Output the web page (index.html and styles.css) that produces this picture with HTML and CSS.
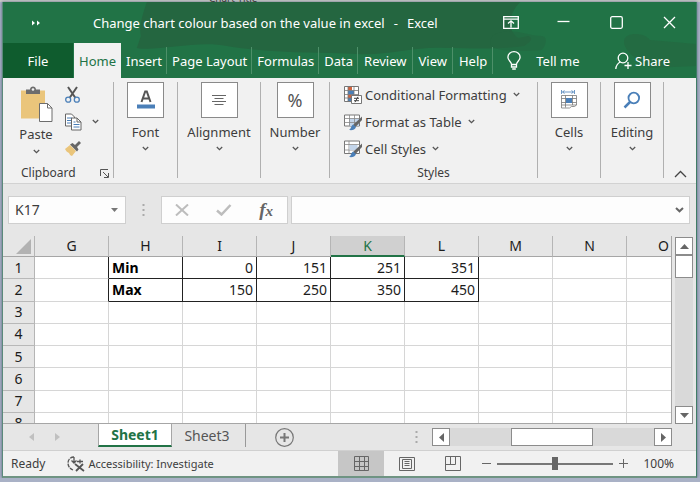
FILE: index.html
```html
<!DOCTYPE html>
<html lang="en">
<head>
<meta charset="utf-8">
<title>Change chart colour based on the value in excel - Excel</title>
<link rel="stylesheet" href="styles.css">
</head>
<body>
<div class="behind"><span>Chart Title</span></div>
<div class="window">
  <header class="top">
    <svg class="top-art" viewBox="0 0 694 76" preserveAspectRatio="none" aria-hidden="true">
      <path d="M144 0c-4 12-8 24-6 34l-4 12c20 4 60-8 90-2 50 8 90 6 130 8 30 2 60-8 90-6 20 0 50 2 78-2 6-4 10-8 4-10l-10 2c-12-8-10-24 2-36z"/>
      <path d="M488 42c-2-8 8-13 17-12 12-2 22 4 34 4 8 0 4 12 0 14-20 2-48 2-51-6z" opacity=".5"/>
      <path d="M622 38c2-8 20-8 26 0l46 4v22l-46 2c-8-6-28-16-26-28z" opacity=".6"/>
    </svg>
    <div class="titlebar">
      <button class="qat" aria-label="Customize Quick Access Toolbar"><svg width="10" height="8" viewBox="0 0 10 8"><path d="M1 1.500l3 2.500-3 2.500zM6 1.500l3 2.500-3 2.500z" fill="#fff"/></svg></button>
      <h1>Change chart colour based on the value in excel<span class="dash">-</span>Excel</h1>
      <div class="winbtns">
        <button aria-label="Ribbon Display Options"><svg width="16" height="13" viewBox="0 0 16 13"><path d="M.7.7h14.6v11.6H.7zM.7 3.2h14.6M8 11.500V5M5 7.500L8 4.800l3 2.700"/></svg></button>
        <button aria-label="Minimize"><svg width="13" height="13" viewBox="0 0 13 13"><path d="M.5 5.500h12"/></svg></button>
        <button aria-label="Maximize"><svg width="13" height="13" viewBox="0 0 13 13"><rect x=".7" y=".7" width="11.600" height="11.600" rx="1.500"/></svg></button>
        <button aria-label="Close"><svg width="13" height="13" viewBox="0 0 13 13"><path d="M1 1l11 11M12 1L1 12"/></svg></button>
      </div>
    </div>
    <nav class="tabs">
      <button class="file">File</button>
      <button class="active">Home</button>
      <button>Insert</button>
      <button>Page Layout</button>
      <button>Formulas</button>
      <button>Data</button>
      <button>Review</button>
      <button>View</button>
      <button>Help</button>
      <button class="tell"><svg width="14" height="19" viewBox="0 0 14 19"><path d="M4.500 13.500c0-3-3.600-3.600-3.600-7.300a6.100 5.500 0 0 1 12.200 0c0 3.700-3.600 4.300-3.600 7.300zM4.500 13.500v2.500h5v-2.500M5.200 18h3.600"/></svg>Tell me</button>
      <button class="share"><svg width="17" height="18" viewBox="0 0 17 18"><circle cx="8" cy="6" r="4.800"/><path d="M.8 17c.3-3.500 2-5.800 4.600-7M9.500 13.500h7M13 10v7"/></svg>Share</button>
    </nav>
  </header>

  <section class="ribbon">
    <div class="group clipboard">
      <div class="clip-body">
        <button class="paste">
          <svg width="33" height="36" viewBox="0 0 33 36"><path d="M1 4.500h24V32.500H1z" fill="#eac57b"/><path d="M6 8V3.500h4C10 1.500 11.500.5 13 .5s3 1 3 3h4V8z" fill="#6d6d6d"/><circle cx="13" cy="3.500" r="1.300" fill="#f1f1f1"/><path d="M19.500 17.500h8l4.500 4.500v13.500H19.500z" fill="#fff" stroke="#6d6d6d"/><path d="M27.500 17.500V22H32" fill="none" stroke="#6d6d6d"/></svg>
          <span>Paste</span>
          <svg class="chev" viewBox="0 0 7 5"><path d="M.8 1l2.700 2.600L6.200 1"/></svg>
        </button>
        <div class="clip-tools">
          <button aria-label="Cut"><svg width="17" height="18" viewBox="0 0 17 18" fill="none"><path d="M3 1L10.500 12M12 1L4.500 12" stroke="#555" stroke-width="2"/><circle cx="3.200" cy="13.700" r="2.500" stroke="#4a7fb8" stroke-width="1.300"/><circle cx="11.800" cy="13.700" r="2.500" stroke="#4a7fb8" stroke-width="1.300"/></svg></button>
          <button aria-label="Copy"><svg width="17" height="18" viewBox="0 0 17 18" fill="#fff" stroke="#666"><path d="M.5 1h6l3 3v9h-9z"/><path d="M2 5h5M2 7.500h5M2 10h5" stroke="#4a7fb8"/><path d="M6.500 5H12l4 4v8H6.500z"/><path d="M12 5v4h4" fill="none"/><path d="M8.500 9h2M8.500 11.500h6M8.500 14h6" stroke="#4a7fb8"/></svg></button>
          <button aria-label="Format Painter"><svg width="17" height="16" viewBox="0 0 17 16"><path d="M0 9l5-4 6 6-4 5c-2-1-2-1-3-3-2-1-3-2-4-4z" fill="#eac57b"/><path d="M5 4.500L7.500 3l2.500 2L14 1l2 2-4 4 1.500 2.500L12 11.500z" fill="#666"/></svg></button>
        </div>
        <button class="more" aria-label="Copy options"><svg class="chev" viewBox="0 0 7 5"><path d="M.8 1l2.700 2.600L6.200 1"/></svg></button>
      </div>
      <div class="caption"><span>Clipboard</span><button aria-label="Clipboard settings"><svg width="9" height="9" viewBox="0 0 9 9" fill="none" stroke="#555"><path d="M.5 7V.5H8M3 3l5 5M8.500 4v4.500H4"/></svg></button></div>
    </div>
    <div class="group font"><button class="big"><span class="box"><svg width="20" height="22" viewBox="0 0 20 22"><path d="M5.500 13L9.200 2.500h1.600L14.500 13M6.800 9.500h6.400" fill="none" stroke="#555" stroke-width="2"/><path d="M1 15.500h18v4H1z" fill="#4a7fb8"/></svg></span><span>Font</span><svg class="chev" viewBox="0 0 7 5"><path d="M.8 1l2.700 2.600L6.200 1"/></svg></button></div>
    <div class="group alignment"><button class="big"><span class="box"><svg width="16" height="12" viewBox="0 0 16 12" stroke="#666"><path d="M1 1.500h14M3.500 4.500h9M1 7.500h14M3.500 10.500h9"/></svg></span><span>Alignment</span><svg class="chev" viewBox="0 0 7 5"><path d="M.8 1l2.700 2.600L6.200 1"/></svg></button></div>
    <div class="group number"><button class="big"><span class="box pct">%</span><span>Number</span><svg class="chev" viewBox="0 0 7 5"><path d="M.8 1l2.700 2.600L6.200 1"/></svg></button></div>
    <div class="group styles">
      <div class="style-list">
        <button><svg width="18" height="18" viewBox="0 0 18 18"><path d="M.5.5h14v15H.5z" fill="#fff" stroke="#777"/><path d="M4 1h4v3.500H4zM4 8.500h6V12H4z" fill="#d0633f"/><path d="M4 4.500h6v4H4zM4 12h3v3H4z" fill="#4a7fb8"/><path d="M4 .5v15M10 .5v8M.5 4.500h14M.5 8.500h14M.5 12h7" stroke="#777" stroke-width=".8"/><path d="M7.500 9.500h10v8h-10z" fill="#fff" stroke="#777"/><path d="M10 12.300h5M10 14.700h5M14 10.800l-3 5.400" stroke="#444"/></svg>Conditional Formatting<svg class="chev" viewBox="0 0 7 5"><path d="M.8 1l2.700 2.600L6.200 1"/></svg></button>
        <button><svg width="18" height="18" viewBox="0 0 18 18"><path d="M.5 2h15v11H.5z" fill="#fff" stroke="#777"/><path d="M5 5.500h10V13H5z" fill="#c3d5ea"/><path d="M5.500 2v11M10.500 2v11M.5 5.500h15M.5 9.500h15" stroke="#888" stroke-width=".8"/><path d="M18 3.500V7l-6.500 7-2.500-2z" fill="#666"/><path d="M9 11.500l3 2.500c-1 3-4 3.500-7 3 2-1 2-4 4-5.500z" fill="#4a7fb8"/></svg>Format as Table<svg class="chev" viewBox="0 0 7 5"><path d="M.8 1l2.700 2.600L6.200 1"/></svg></button>
        <button><svg width="18" height="18" viewBox="0 0 18 18"><path d="M.5 1h15v12.500H.5z" fill="#fff" stroke="#777"/><path d="M.5 4.500h15M.5 10h15M5 1v12.500" stroke="#888" stroke-width=".8"/><path d="M5.500 5h8v5h-8z" fill="#c3d5ea"/><path d="M18 3.500V7l-6.500 7-2.500-2z" fill="#666"/><path d="M9 11.500l3 2.500c-1 3-4 3.500-7 3 2-1 2-4 4-5.500z" fill="#4a7fb8"/></svg>Cell Styles<svg class="chev" viewBox="0 0 7 5"><path d="M.8 1l2.700 2.600L6.200 1"/></svg></button>
      </div>
      <div class="caption"><span>Styles</span></div>
    </div>
    <div class="group cells"><button class="big"><span class="box"><svg width="18" height="20" viewBox="0 0 18 20" fill="none"><path d="M1.500 0v4M14.500 0v4M2.500 2h11M4.500.5L2.500 2l2 1.500M11.500.5l2 1.500-2 1.500" stroke="#4a7fb8" stroke-width=".8"/><path d="M1.500 5.500h15v9.500h-15zM1.500 8.500h15M1.500 12.500h15M5.500 5.500v12M12.500 5.500v9.500M1.500 15v3h8l2-1.500h3L16.500 15" stroke="#777" stroke-width=".8"/><path d="M6 8h6v5H6z" fill="#4a7fb8"/></svg></span><span>Cells</span><svg class="chev" viewBox="0 0 7 5"><path d="M.8 1l2.700 2.600L6.200 1"/></svg></button></div>
    <div class="group editing"><button class="big"><span class="box"><svg width="18" height="18" viewBox="0 0 18 18" fill="none" stroke="#4a7fb8"><circle cx="10.800" cy="7" r="5.300" stroke-width="1.800"/><path d="M7 11l-5.500 5.500" stroke-width="2.500"/></svg></span><span>Editing</span><svg class="chev" viewBox="0 0 7 5"><path d="M.8 1l2.700 2.600L6.200 1"/></svg></button></div>
    <button class="collapse" aria-label="Collapse the Ribbon"><svg width="13" height="8" viewBox="0 0 13 8"><path d="M1 7l5.500-5.500L12 7" fill="none" stroke="#444" stroke-width="1.300"/></svg></button>
  </section>

  <section class="formula">
    <div class="namebox"><input aria-label="Name Box" value="K17"><svg width="7" height="4" viewBox="0 0 7 4"><path d="M0 0h7L3.500 4z" fill="#777"/></svg></div>
    <svg class="grip" width="3" height="12" viewBox="0 0 3 12"><path d="M.5 0h2v2h-2zM.5 5h2v2h-2zM.5 10h2v2h-2z" fill="#aaa"/></svg>
    <div class="fxbox">
      <button aria-label="Cancel"><svg width="14" height="12" viewBox="0 0 14 12"><path d="M1 .5l12 11M13 .5L1 11.500" stroke="#bdbdbd" stroke-width="2"/></svg></button>
      <button aria-label="Enter"><svg width="16" height="12" viewBox="0 0 16 12"><path d="M1 6.500l4.500 4L14.500 1" fill="none" stroke="#bdbdbd" stroke-width="2.500"/></svg></button>
      <button class="fx" aria-label="Insert Function"><i>f</i><i class="x">x</i></button>
    </div>
    <div class="fbar"><input aria-label="Formula Bar"><svg width="9" height="6" viewBox="0 0 9 6"><path d="M1 1l3.500 3.300L8 1" fill="none" stroke="#666" stroke-width="2"/></svg></div>
  </section>

  <section class="sheet">
    <div class="grid">
      <table>
        <colgroup><col class="c0"><col span="9" class="c"></colgroup>
        <thead><tr><th class="corner"><svg width="15" height="15" viewBox="0 0 15 15"><path d="M15 0v15H0z" fill="#b2b2b2"/></svg></th><th>G</th><th>H</th><th>I</th><th>J</th><th class="sel">K</th><th>L</th><th>M</th><th>N</th><th>O</th></tr></thead>
        <tbody>
          <tr class="data"><th>1</th><td class="edge"></td><td>Min</td><td>0</td><td>151</td><td>251</td><td>351</td><td></td><td></td><td></td></tr>
          <tr class="data"><th>2</th><td class="edge"></td><td>Max</td><td>150</td><td>250</td><td>350</td><td>450</td><td></td><td></td><td></td></tr>
          <tr><th>3</th><td></td><td></td><td></td><td></td><td></td><td></td><td></td><td></td><td></td></tr>
          <tr><th>4</th><td></td><td></td><td></td><td></td><td></td><td></td><td></td><td></td><td></td></tr>
          <tr><th>5</th><td></td><td></td><td></td><td></td><td></td><td></td><td></td><td></td><td></td></tr>
          <tr><th>6</th><td></td><td></td><td></td><td></td><td></td><td></td><td></td><td></td><td></td></tr>
          <tr><th>7</th><td></td><td></td><td></td><td></td><td></td><td></td><td></td><td></td><td></td></tr>
          <tr><th>8</th><td></td><td></td><td></td><td></td><td></td><td></td><td></td><td></td><td></td></tr>
        </tbody>
      </table>
    </div>
    <div class="vscroll">
      <button aria-label="Scroll up"><svg width="9" height="5" viewBox="0 0 9 5"><path d="M0 5h9L4.500 0z"/></svg></button>
      <div class="vthumb"></div>
      <div class="track"></div>
      <button aria-label="Scroll down"><svg width="9" height="5" viewBox="0 0 9 5"><path d="M0 0h9L4.500 5z"/></svg></button>
    </div>
  </section>

  <section class="sheetbar">
    <div class="arrows"><button aria-label="Previous sheet"><svg width="5" height="8" viewBox="0 0 5 8"><path d="M5 0v8L0 4z"/></svg></button><button aria-label="Next sheet"><svg width="5" height="8" viewBox="0 0 5 8"><path d="M0 0v8l5-4z"/></svg></button></div>
    <button class="stab on">Sheet1</button>
    <button class="stab">Sheet3</button>
    <button class="add" aria-label="New sheet"><svg width="19" height="19" viewBox="0 0 19 19" fill="none" stroke="#777"><circle cx="9.500" cy="9.500" r="8.800" stroke-width="1.200"/><path d="M9.500 5v9M5 9.500h9" stroke-width="2"/></svg></button>
    <svg class="grip" width="3" height="12" viewBox="0 0 3 12"><path d="M.5 0h2v2h-2zM.5 5h2v2h-2zM.5 10h2v2h-2z" fill="#aaa"/></svg>
    <div class="hscroll">
      <button aria-label="Scroll left"><svg width="5" height="9" viewBox="0 0 5 9"><path d="M5 0v9L0 4.500z"/></svg></button>
      <div class="track"></div>
      <div class="hthumb"></div>
      <div class="track"></div>
      <button aria-label="Scroll right"><svg width="5" height="9" viewBox="0 0 5 9"><path d="M0 0v9l5-4.500z"/></svg></button>
    </div>
  </section>

  <footer class="status">
    <span class="ready">Ready</span>
    <button class="acc"><svg width="18" height="16" viewBox="0 0 18 16" fill="none" stroke="#555"><path d="M7 1C3 1 1 4 1 7s1.500 5.500 5 7" stroke-width="1.300" stroke-dasharray="4 1"/><path d="M7 1v5M4.500 4.500L7 7l2.500-2.500M10 5.500h6M13 3.500v4" stroke-width="1.300"/><path d="M8 8l9 7M16 8l-7 7" stroke-width="1.800"/></svg>Accessibility: Investigate</button>
    <div class="views">
      <button class="cur" aria-label="Normal"><svg width="15" height="15" viewBox="0 0 15 15"><path d="M.5.5h14v14H.5zM5.500.5v14M10.500.5v14M.5 5.500h14M.5 10.500h14"/></svg></button>
      <button aria-label="Page Layout view"><svg width="16" height="14" viewBox="0 0 16 14"><path d="M.5.5h15v13H.5zM3.500 2.500h9v9h-9zM5.500 4.500h5M5.500 6.500h5M5.500 8.500h5"/></svg></button>
      <button aria-label="Page Break Preview"><svg width="16" height="15" viewBox="0 0 16 15"><path d="M.5.5h15v14H.5zM5.500.5v8M10.500.5v8M.5 8.500h10"/></svg></button>
    </div>
    <button class="zb" aria-label="Zoom out"><svg width="9" height="9" viewBox="0 0 9 9"><path d="M0 4.500h9"/></svg></button>
    <input class="zoom" type="range" min="10" max="190" value="100" aria-label="Zoom">
    <button class="zb" aria-label="Zoom in"><svg width="9" height="9" viewBox="0 0 9 9"><path d="M0 4.500h9M4.500 0v9"/></svg></button>
    <button class="pctval">100%</button>
  </footer>
</div>
</body>
</html>
```
FILE: styles.css
```css
* { box-sizing: border-box; }
:root {
  --ui: "Noto Sans", "Open Sans", sans-serif;
  --green: #217346;
  --ink: #3d3d3d;
  --grey: #e6e6e6;
  --line: #a6a6a6;
}
html { background: #a9b1c6; }
body { margin: 0; font: 13px/18px var(--ui); color: var(--ink); }
button, input { font: inherit; color: inherit; background: none; border: 0; padding: 0; margin: 0; }
button { white-space: nowrap; }
svg { display: block; flex: none; }

.behind { height: 2px; background: #c9cac7; overflow: hidden; display: flex; align-items: flex-end; padding-left: 209px; font-size: 10px; line-height: 8px; }
.window {
  margin: 0 3px 0 2px;
  border-left: 1px solid #5b8a7b;
  border-right: 1px solid #3f7d66;
  border-bottom: 2px solid #6f9483;
  box-shadow: 0 0 3px #5c6a80;
  background: #f1f1f1;
}

.top { position: relative; background: var(--green); color: #fff; }
.top-art { position: absolute; inset: 0; width: 100%; height: 100%; fill: #246640; }
.titlebar { position: relative; display: flex; align-items: center; height: 41px; }
.qat { width: 90px; padding-left: 28px; }
.titlebar h1 { margin: 0; flex: 1; font-size: 13px; font-weight: 400; white-space: nowrap; }
.dash { padding: 0 9px; }
.winbtns { display: flex; }
.winbtns button { width: 53px; display: flex; justify-content: center; }
.winbtns svg, .tabs svg { fill: none; stroke: #fff; stroke-width: 1.3; }
.tabs { position: relative; display: flex; align-items: stretch; height: 35px; }
.tabs button { padding: 0 5px; position: relative; }
.tabs button:nth-child(n+7) { padding: 0 6px; }
.tabs button + button:not(.active):not(.share)::after {
  content: ""; position: absolute; right: 0; top: 4px; bottom: 4px; width: 1px; background: #4d9069;
}
.tabs .tell::after { display: none; }
.tabs .file { width: 70px; background: #0f5c2e; }
.tabs .active { background: #f1f1f1; color: var(--green); margin-left: 1px; }
.tabs .tell, .tabs .share { display: flex; align-items: center; }
.tabs button.tell { gap: 15px; padding-left: 14px; }
.tabs button.share { gap: 3px; margin-left: auto; padding-right: 26px; }

.ribbon { display: flex; padding: 4px 0 5px; height: 106px; border-bottom: 1px solid #d2d2d2; }
.group { border-right: 1px solid #b0b0b0; display: flex; flex-direction: column; flex: none; }
.chev { width: 7px; height: 5px; fill: none; stroke: #555; stroke-width: 1.3; }
.clipboard { width: 111px; }
.clip-body { display: flex; flex: 1; padding-left: 15px; }
.paste { width: 36px; display: flex; flex-direction: column; align-items: center; padding-top: 4px; gap: 3px; }
.paste .chev { margin-top: 3px; }
.clip-tools { display: flex; flex-direction: column; gap: 9px; padding: 4px 0 0 11px; }
.more { padding: 0 0 8px 10px; }
.caption { display: flex; justify-content: center; align-items: center; font-size: 12px; line-height: 10px; }
.clipboard .caption { justify-content: space-between; padding: 0 4px 0 18px; }
.font { width: 64px; }
.alignment { width: 83px; }
.number { width: 69px; }
.styles { flex: 1; }
.cells, .editing { width: 63px; }
.big { display: flex; flex-direction: column; align-items: center; gap: 5px; }
.box { width: 37px; height: 36px; border: 1px solid #8a8a8a; background: #fff; display: flex; align-items: center; justify-content: center; }
.pct { font-size: 18px; color: #555; }
.style-list { display: flex; flex-direction: column; flex: 1; gap: 2px; padding-left: 14px; }
.style-list button { display: flex; align-items: center; gap: 3px; height: 25px; }
.style-list .chev { margin-left: 3px; }
.collapse { flex: 0 0 32px; display: flex; align-items: flex-end; justify-content: center; }

.formula { display: flex; align-items: center; background: var(--grey); padding: 12px 6px 12px 5px; height: 52px; font-size: 14px; }
.formula input { width: 100%; min-width: 0; outline: 0; }
.namebox, .fxbox, .fbar { display: flex; align-items: center; height: 28px; background: #fdfdfd; border: 1px solid #cfcfcf; }
.namebox { width: 118px; padding: 0 7px 0 6px; }
.formula .grip { margin: 0 16px; }
.fxbox { width: 127px; justify-content: space-between; padding: 0 14px 0 13px; margin-right: 3px; }
.fx { font: bold 19px/20px "Liberation Serif", serif; color: #666; }
.fx .x { font-size: 15px; }
.fbar { flex: 1; padding-right: 5px; }

.sheet { display: flex; height: 188px; background: var(--grey); }
.grid { flex: 1; min-width: 0; overflow: hidden; border-right: 1px solid var(--line); border-bottom: 1px solid var(--line); }
table { table-layout: fixed; width: 698px; height: 199px; border-collapse: separate; border-spacing: 0; font-size: 14px; line-height: 18px; color: #1c1c1c; }
.c0 { width: 32px; }
.c { width: 74px; }
th { font-weight: 400; padding: 0; background: var(--grey); border-right: 1px solid #b5b5b5; }
thead th { height: 21px; border-bottom: 1px solid var(--line); }
.corner svg { margin-left: 13px; }
.sel { background: #d0d0d0; color: var(--green); border-bottom: 2px solid var(--green); }
tbody th { border-bottom: 1px solid #b8b8b8; }
td { padding: 0 3px; background: #fff; text-align: right; border-right: 1px solid #d6d6d6; border-bottom: 1px solid #d6d6d6; }
.data .edge { border-right-color: #222; }
.data td:nth-child(n+3):nth-child(-n+7) { border-color: #222; }
.data td:nth-child(3) { text-align: left; font-weight: 700; color: #000; }
.vscroll { width: 24px; display: flex; flex-direction: column; padding: 1px 3px 0; }
.vscroll button, .hscroll button { width: 18px; height: 18px; flex: none; border: 1px solid #8c8c8c; background: #fff; display: flex; align-items: center; justify-content: center; }
.vscroll svg, .hscroll svg { fill: #666; }
.vthumb { height: 23px; background: #fff; border: 1px solid #8c8c8c; }
.track { flex: 1; background: #d9d9d9; }

.sheetbar { display: flex; align-items: center; height: 27px; background: var(--grey); border-bottom: 1px solid #d0d0d0; }
.arrows { display: flex; gap: 21px; width: 95px; padding-left: 26px; fill: #c0c0c0; }
.stab { align-self: flex-start; height: 23px; width: 74px; font-size: 14px; color: #555; }
.stab.on { background: #fff; color: var(--green); font-weight: 700; border: solid var(--line); border-width: 0 1px 2px; border-bottom-color: var(--green); }
.stab:not(.on) { border-right: 1px solid #999; padding-right: 3px; }
.add { margin-left: 29px; }
.sheetbar .grip { margin: 0 14px 0 auto; }
.hscroll { display: flex; width: 240px; margin-right: 24px; }
.hthumb { width: 82px; border: 1px solid #8c8c8c; background: #fff; }
.hscroll .track:nth-child(2) { flex: 0 0 61px; }

.status { display: flex; align-items: center; height: 25px; font-size: 12px; padding-right: 22px; }
.ready { padding-left: 8px; }
.acc { display: flex; align-items: center; gap: 3px; margin-left: 22px; font-size: 11px; }
.views { display: flex; height: 100%; margin-left: auto; }
.views button { width: 46px; display: flex; align-items: center; justify-content: center; }
.views .cur { background: #c6c6c6; }
.views svg, .zb svg { fill: none; stroke: #666; }
.views { margin-right: 6px; }
.zoom { -webkit-appearance: none; appearance: none; width: 116px; height: 14px; margin: 0 6px; background: linear-gradient(#777, #777) center / 100% 2px no-repeat; }
.zoom::-webkit-slider-thumb { -webkit-appearance: none; width: 6px; height: 13px; background: #666; }
.pctval { margin-left: 15px; }
```
